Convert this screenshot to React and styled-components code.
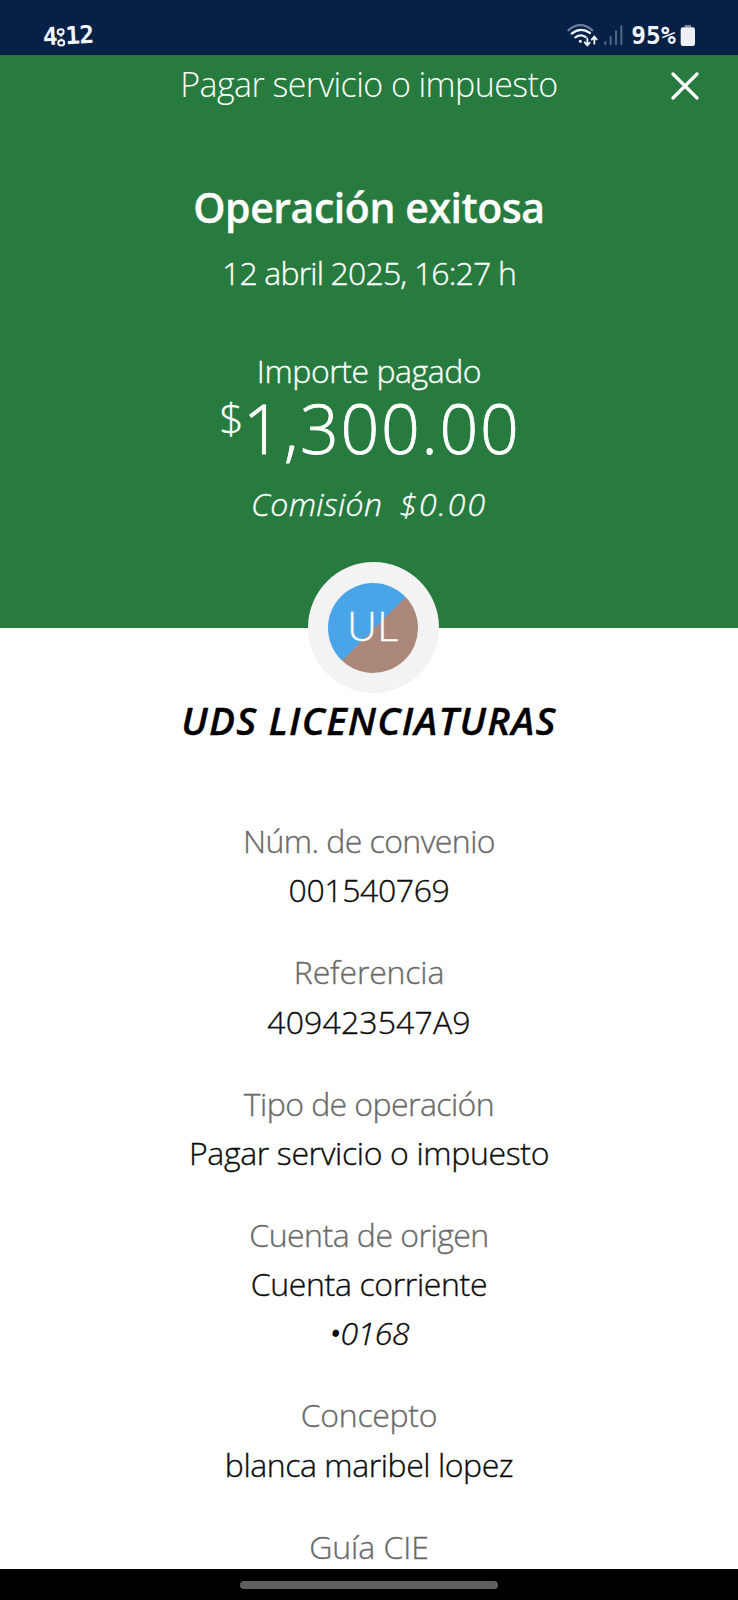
import React from 'react';
import styled, { createGlobalStyle } from 'styled-components';

const GlobalStyle = createGlobalStyle`
  *, *::before, *::after { box-sizing: border-box; }
  body { margin: 0; background: #fff; }
`;

const Screen = styled.div`
  display: flex;
  flex-direction: column;
  width: 738px;
  height: 1600px;
  overflow: hidden;
  background: #fff;
  color: #0b0b0b;
  font-family: "Open Sans", "Noto Sans", sans-serif;
  font-weight: 300;
  font-size: 32px;
  -webkit-text-stroke: 0.35px currentColor;
`;

const StatusBar = styled.div`
  flex: none;
  display: flex;
  justify-content: space-between;
  height: 55px;
  padding: 22px 43px 0 43px;
  background: #062046;
  color: #f1f5fb;
  font: 700 24.5px/26px "DejaVu Sans Mono", monospace;
  -webkit-text-stroke: 0;
`;

const Clock = styled.div`
  display: flex;
  margin-top: 1px;
  transform: rotate(-3deg);
`;

const Digits = styled.span`
  letter-spacing: -0.8px;
`;

const Colon = styled.span`
  position: relative;
  width: 8.5px;
  display: flex;
  justify-content: center;
  font-size: 14px;
  line-height: 26px;

  &::before,
  &::after {
    content: '';
    position: absolute;
    left: 0.5px;
    width: 7.5px;
    height: 7.5px;
    border: 2px solid #f1f5fb;
    border-radius: 50%;
    background: #062046;
  }
  &::before { top: 4.5px; }
  &::after { top: 15.5px; }
`;

const StatusIcons = styled.div`
  display: flex;
  align-items: flex-start;
`;

const Battery = styled.span`
  letter-spacing: 0.2px;
  margin: 1px 4px 0 7px;
`;

const Hero = styled.section`
  flex: none;
  display: flex;
  flex-direction: column;
  align-items: center;
  height: 572.7px;
  background: #277b3e;
  color: #fff;
`;

const TitleBar = styled.header`
  display: grid;
  grid-template-columns: 80px 1fr 80px;
  align-items: center;
  width: 100%;
  height: 58px;
`;

const Title = styled.h1`
  margin: 0;
  text-align: center;
  font-size: 34px;
  font-weight: 300;
  line-height: 58px;
  letter-spacing: -0.58px;
  white-space: nowrap;
  -webkit-text-stroke: 0;
`;

const CloseButton = styled.button`
  display: flex;
  justify-content: flex-end;
  margin: 4px 39px 0 0;
  padding: 0;
  border: 0;
  background: none;
  color: #fff;
`;

const Outcome = styled.h2`
  margin: 66px 0 0;
  font-size: 41px;
  font-weight: 600;
  line-height: 56px;
  letter-spacing: -0.45px;
`;

const DateLine = styled.div`
  margin-top: 15.5px;
  line-height: 44px;
  letter-spacing: -0.83px;
`;

const AmountLabel = styled.div`
  margin-top: 54.5px;
  line-height: 43px;
  letter-spacing: -0.45px;
`;

const Amount = styled.div`
  margin-top: 6.5px;
  padding-left: 2px;
  font-size: 68px;
  line-height: 58px;
  letter-spacing: 1.73px;
  white-space: nowrap;
  -webkit-text-stroke: 0.8px currentColor;
`;

const Currency = styled.span`
  font-size: 43px;
  line-height: 0;
  vertical-align: 20px;
  letter-spacing: -0.8px;
  -webkit-text-stroke: 0.3px currentColor;
`;

const Fee = styled.div`
  display: flex;
  align-items: baseline;
  gap: 17px;
  margin-top: 25px;
  font-style: italic;
  line-height: 44px;
  letter-spacing: 0.36px;
`;

const FeeValue = styled.span`
  letter-spacing: 2px;
`;

const Receipt = styled.main`
  flex: 1;
  min-height: 0;
  display: flex;
  flex-direction: column;
  align-items: center;
`;

const Avatar = styled.div`
  flex: none;
  display: flex;
  align-items: center;
  justify-content: center;
  width: 131px;
  height: 131px;
  margin: -65.5px 0 0 8px;
  border-radius: 50%;
  background: #f3f3f3;
`;

const Initials = styled.div`
  width: 90px;
  height: 90px;
  border-radius: 50%;
  background: linear-gradient(135deg, #4aa5e8 50.5%, #aa8778 51.3%);
  color: #fff;
  font-size: 41px;
  line-height: 85px;
  text-align: center;
  letter-spacing: 0.5px;
`;

const Payee = styled.h3`
  margin: 2px 0 0;
  color: #000;
  font-size: 38.7px;
  font-style: italic;
  font-weight: 600;
  line-height: 50px;
  letter-spacing: 1.2px;
  white-space: nowrap;
`;

const Details = styled.dl`
  display: flex;
  flex-direction: column;
  gap: 32.8px;
  margin: 71.1px 0 0;
  text-align: center;
  line-height: 49.2px;
  white-space: nowrap;
`;

const Label = styled.dt`
  color: #6a6a6a;
  letter-spacing: ${(p) => p.$tracking}px;
`;

const Value = styled.dd`
  margin: 0;
  letter-spacing: ${(p) => p.$tracking}px;
  font-style: ${(p) => (p.$italic ? 'italic' : 'normal')};
`;

const Bullet = styled.span`
  -webkit-text-stroke: 1.8px currentColor;
`;

const NavBar = styled.footer`
  flex: none;
  display: flex;
  justify-content: center;
  height: 31px;
  padding-top: 12px;
  background: #000;
`;

const HomeHandle = styled.div`
  width: 258px;
  height: 8px;
  border-radius: 4px;
  background: #5f5f5f;
`;

const WifiIcon = () => (
  <svg width="34" height="26" viewBox="585 66 102 78" fill="none" stroke="#eef3fa" strokeWidth="6.5" strokeLinecap="round">
    <path d="M592 91Q628 60 664 91" stroke="#6b7c98" />
    <path d="M602 101Q628 79 657 99" />
    <path d="M613 112Q628 101 644 111" />
    <circle cx="628" cy="124" r="4.5" fill="#eef3fa" stroke="none" />
    <path d="M649 115V134M641 127L649 136L656 128" strokeWidth="5.5" />
    <path d="M670 131V112M662 119L670 110L677 118" strokeWidth="5.5" />
  </svg>
);

const SignalIcon = () => (
  <svg width="24" height="26" viewBox="687 66 72 78" fill="none" stroke="#526683" strokeWidth="6" strokeLinecap="round">
    <path d="M703 126V133M719 111V133M735 94V133" />
    <path d="M751 79V133" />
  </svg>
);

const BatteryIcon = () => (
  <svg width="15" height="26" viewBox="931 66 45 78">
    <path d="M945 75H964V82H945Z" fill="#7c899f" />
    <rect x="933" y="82" width="43" height="56" rx="7" fill="#eef0f6" />
  </svg>
);

const CloseIcon = () => (
  <svg width="28" height="28" viewBox="0 0 28 28" fill="none" stroke="currentColor" strokeWidth="3.2" strokeLinecap="round">
    <path d="M2 2L26 26M26 2L2 26" />
  </svg>
);

const details = [
  { label: 'Núm. de convenio', tracking: -0.56, values: [{ text: '001540769', tracking: -0.39 }] },
  { label: 'Referencia', tracking: -0.17, values: [{ text: '409423547A9', tracking: 0.14 }] },
  { label: 'Tipo de operación', tracking: -0.57, values: [{ text: 'Pagar servicio o impuesto', tracking: -0.35 }] },
  {
    label: 'Cuenta de origen',
    tracking: -0.52,
    values: [
      { text: 'Cuenta corriente', tracking: -0.36 },
      { text: '0168', tracking: -0.46, italic: true, masked: true },
    ],
  },
  { label: 'Concepto', tracking: -0.29, values: [{ text: 'blanca maribel lopez', tracking: -0.44 }] },
  { label: 'Guía CIE', tracking: -0.06, values: [] },
];

export default function App() {
  return (
    <Screen>
      <GlobalStyle />
      <StatusBar>
        <Clock>
          <Digits>4</Digits>
          <Colon>:</Colon>
          <Digits>12</Digits>
        </Clock>
        <StatusIcons>
          <WifiIcon />
          <SignalIcon />
          <Battery>95%</Battery>
          <BatteryIcon />
        </StatusIcons>
      </StatusBar>
      <Hero>
        <TitleBar>
          <span />
          <Title>Pagar servicio o impuesto</Title>
          <CloseButton aria-label="Cerrar">
            <CloseIcon />
          </CloseButton>
        </TitleBar>
        <Outcome>Operación exitosa</Outcome>
        <DateLine>12 abril 2025, 16:27 h</DateLine>
        <AmountLabel>Importe pagado</AmountLabel>
        <Amount>
          <Currency>$</Currency>1,300.00
        </Amount>
        <Fee>
          <span>Comisión</span>
          <FeeValue>$0.00</FeeValue>
        </Fee>
      </Hero>
      <Receipt>
        <Avatar>
          <Initials>UL</Initials>
        </Avatar>
        <Payee>UDS LICENCIATURAS</Payee>
        <Details>
          {details.map(({ label, tracking, values }) => (
            <div key={label}>
              <Label $tracking={tracking}>{label}</Label>
              {values.map((v) => (
                <Value key={v.text} $tracking={v.tracking} $italic={v.italic}>
                  {v.masked && <Bullet>•</Bullet>}
                  {v.text}
                </Value>
              ))}
            </div>
          ))}
        </Details>
      </Receipt>
      <NavBar>
        <HomeHandle />
      </NavBar>
    </Screen>
  );
}
